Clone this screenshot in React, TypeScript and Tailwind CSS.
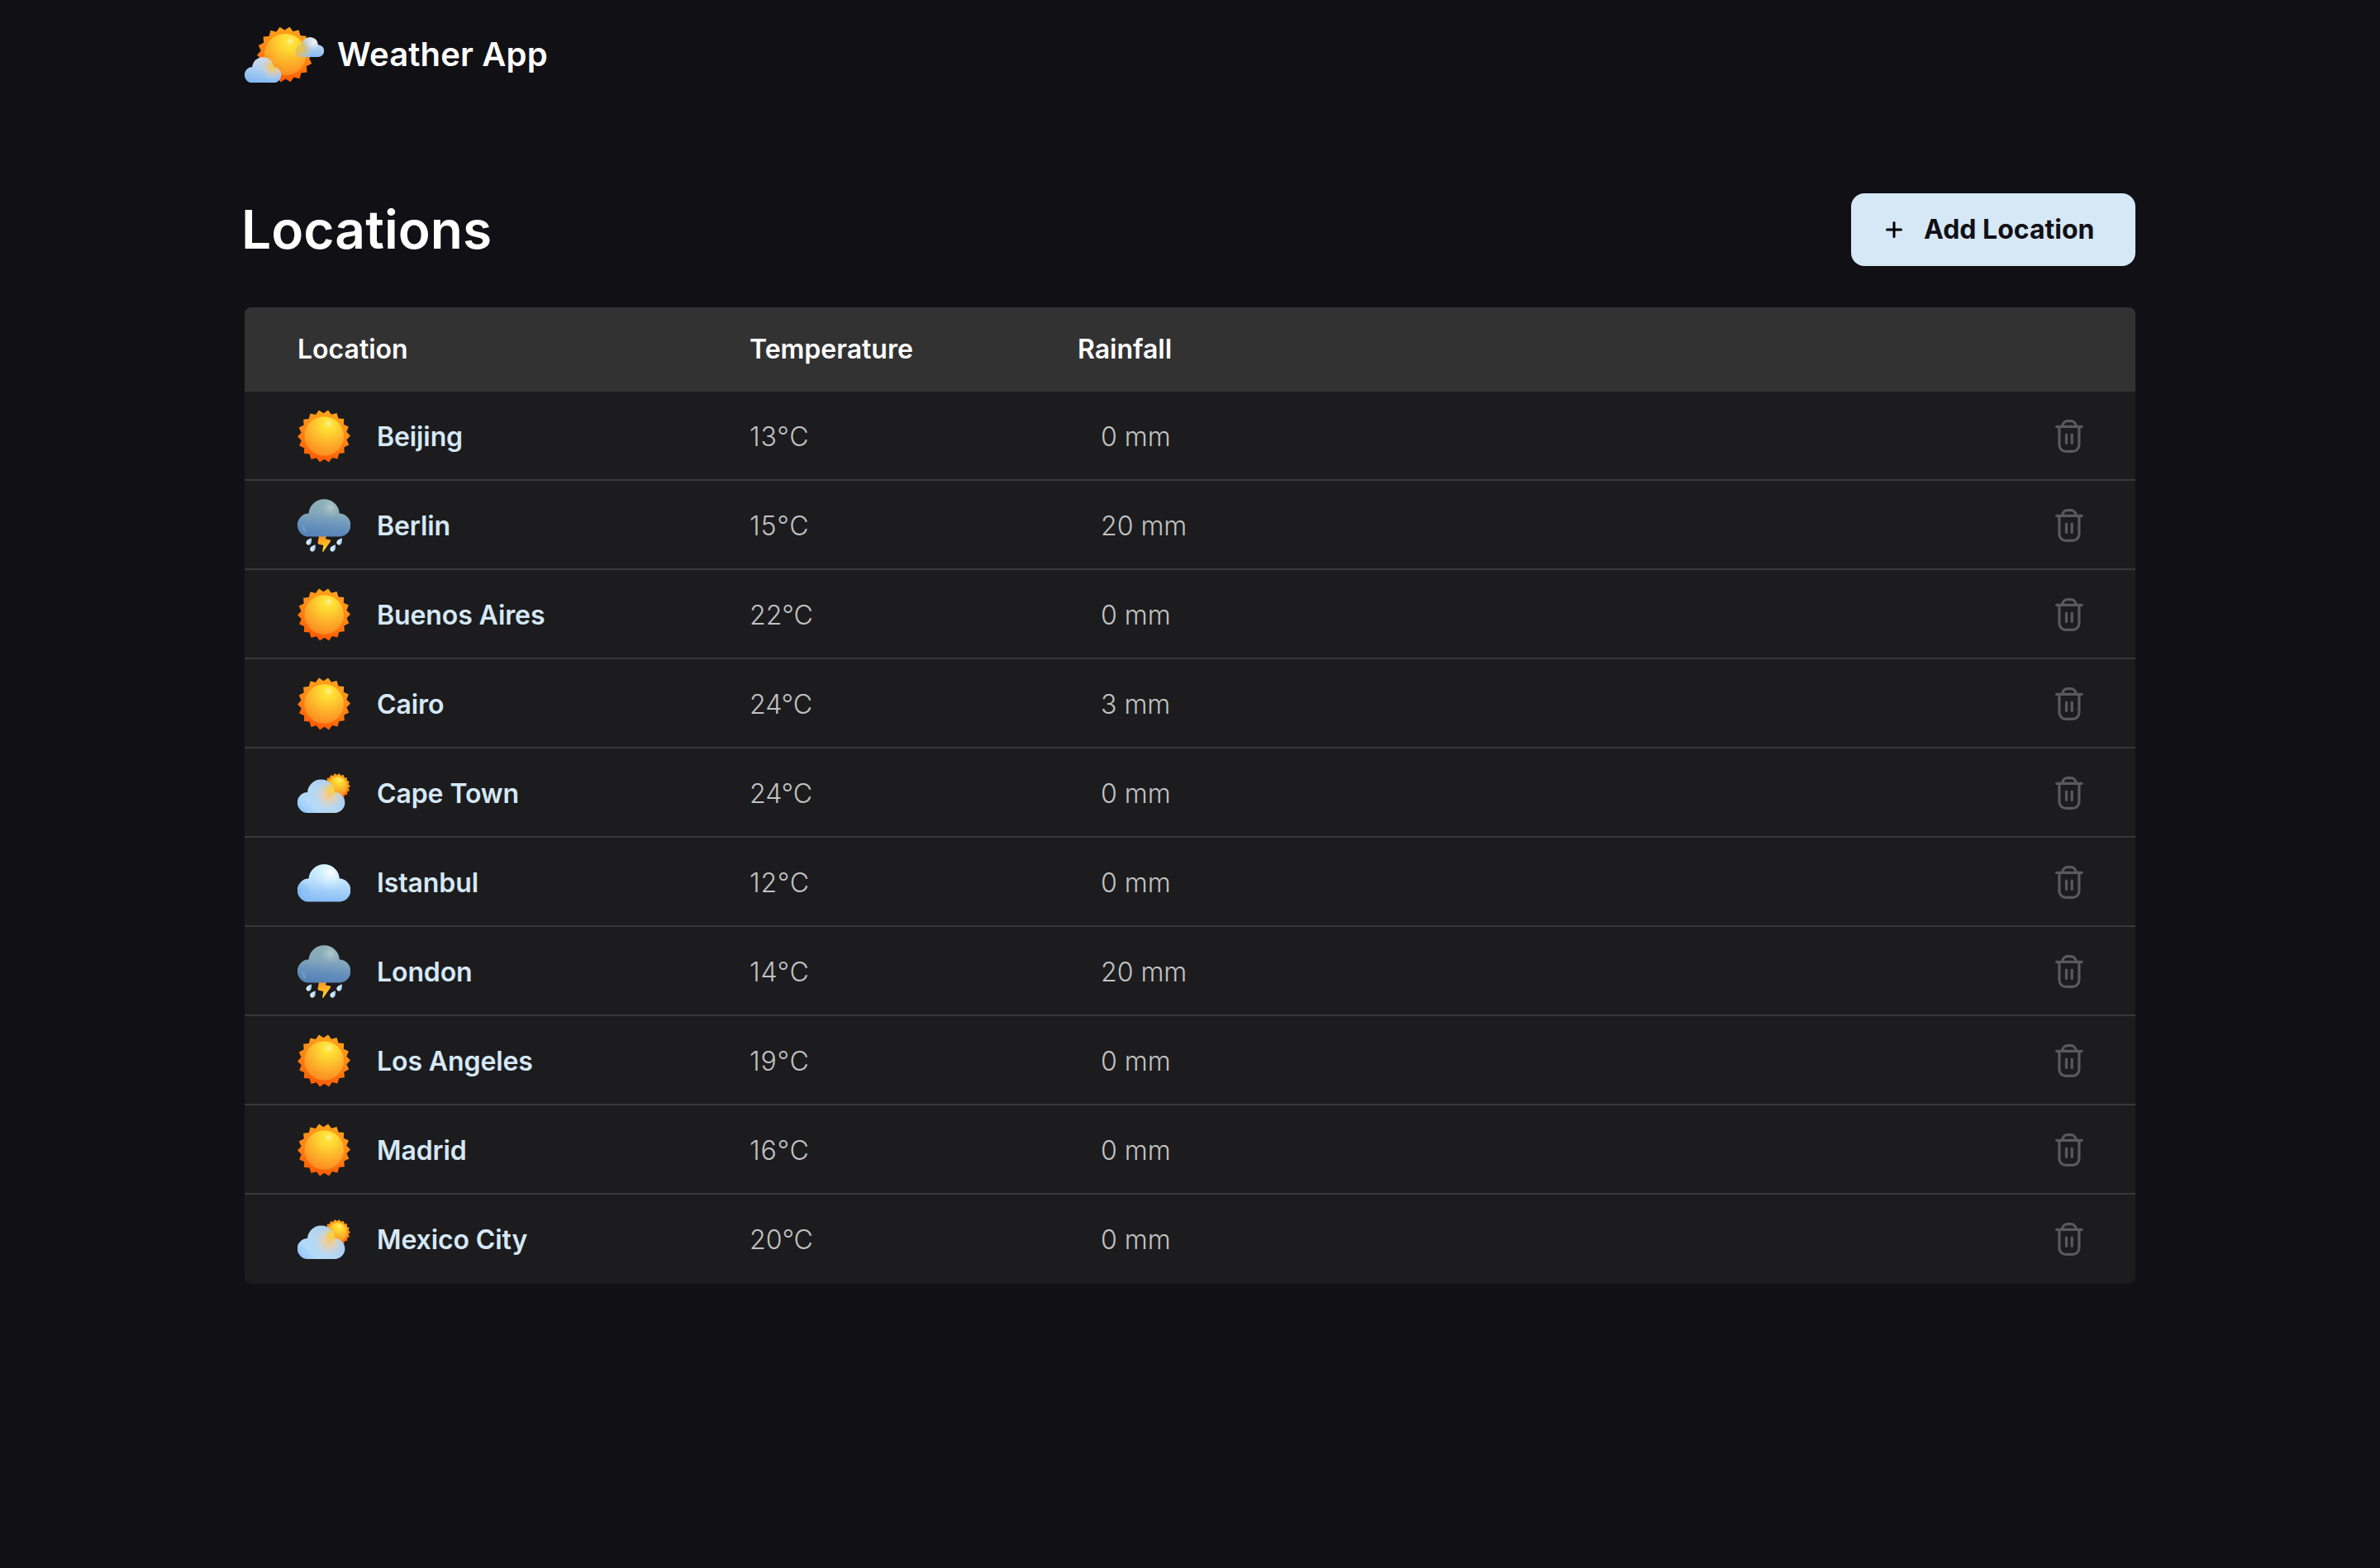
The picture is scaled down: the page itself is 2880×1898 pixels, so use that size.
import React, { useId } from 'react';

const CLOUD =
  'M14 45.6 A14 14 0 0 1 13.5 17.6 A18.7 18.7 0 0 1 50.8 17.6 A14 14 0 0 1 50 45.6 Z';

function starPoints(cx: number, cy: number, outer: number, inner: number) {
  const points: string[] = [];
  for (let i = 0; i < 36; i++) {
    const r = i % 2 === 0 ? outer : inner;
    const a = ((i * 10 - 1) * Math.PI) / 180;
    points.push(`${(cx + r * Math.cos(a)).toFixed(2)},${(cy + r * Math.sin(a)).toFixed(2)}`);
  }
  return points.join(' ');
}

const STAR = starPoints(32, 32, 32, 27.8);

function SunShape({ id, transform }: { id: string; transform?: string }) {
  return (
    <g transform={transform}>
      <defs>
        <linearGradient id={`${id}-ray`} x1="40" y1="2" x2="24" y2="62" gradientUnits="userSpaceOnUse">
          <stop offset="0" stopColor="#ffa31c" />
          <stop offset="0.5" stopColor="#ff8413" />
          <stop offset="1" stopColor="#ff5a02" />
        </linearGradient>
        <radialGradient id={`${id}-disk`} cx="37" cy="17" r="39" gradientUnits="userSpaceOnUse">
          <stop offset="0" stopColor="#ffe43a" />
          <stop offset="0.22" stopColor="#ffdc34" />
          <stop offset="0.6" stopColor="#fdb42b" />
          <stop offset="1" stopColor="#fb8c22" />
        </radialGradient>
        <radialGradient id={`${id}-shine`} cx="37.7" cy="16.8" r="7" gradientUnits="userSpaceOnUse">
          <stop offset="0" stopColor="#fff4b4" />
          <stop offset="1" stopColor="#ffe43a" stopOpacity="0" />
        </radialGradient>
      </defs>
      <polygon points={STAR} fill={`url(#${id}-ray)`} />
      <circle cx="32.2" cy="32" r="23.8" fill={`url(#${id}-disk)`} />
      <circle cx="37.7" cy="16.8" r="7" fill={`url(#${id}-shine)`} />
    </g>
  );
}

function SunIcon() {
  const id = useId();
  return (
    <svg className="size-16 shrink-0" viewBox="0 0 64 64">
      <SunShape id={id} />
    </svg>
  );
}

function CloudIcon() {
  const id = useId();
  return (
    <svg className="size-16 shrink-0" viewBox="0 0 64 64">
      <defs>
        <linearGradient id={`${id}-b`} x1="34" y1="0" x2="30" y2="46" gradientUnits="userSpaceOnUse">
          <stop offset="0" stopColor="#d2f3ff" />
          <stop offset="0.4" stopColor="#bfe2fd" />
          <stop offset="1" stopColor="#84bbf5" />
        </linearGradient>
        <radialGradient id={`${id}-h`} cx="40" cy="10" r="22" gradientUnits="userSpaceOnUse">
          <stop offset="0" stopColor="#ffffff" />
          <stop offset="0.25" stopColor="#eafaff" stopOpacity="0.8" />
          <stop offset="1" stopColor="#d2f3ff" stopOpacity="0" />
        </radialGradient>
        <radialGradient id={`${id}-l`} cx="0" cy="34" r="18" gradientUnits="userSpaceOnUse">
          <stop offset="0" stopColor="#74b0f5" stopOpacity="0.8" />
          <stop offset="1" stopColor="#74b0f5" stopOpacity="0" />
        </radialGradient>
      </defs>
      <g transform="translate(0 10)">
        <path d={CLOUD} fill={`url(#${id}-b)`} />
        <path d={CLOUD} fill={`url(#${id}-h)`} />
        <path d={CLOUD} fill={`url(#${id}-l)`} />
        <ellipse cx="8" cy="36.5" rx="1.3" ry="4.5" transform="rotate(-24 8 36.5)" fill="#bfe0ff" opacity="0.25" />
      </g>
    </svg>
  );
}

const DROP =
  'M3.2 -4.2 C3.6 -1.6 3.4 1 2.4 2.6 C1.2 4.5 -1.2 4.6 -2.5 3.2 C-3.9 1.6 -3.2 -0.6 -1.4 -2 C0 -3 1.8 -3.6 3.2 -4.2 Z';

const DROPS = [
  [13.7, 51.5],
  [18.4, 59.5],
  [50.6, 51.5],
  [42.7, 59.5],
];

function StormIcon() {
  const id = useId();
  return (
    <svg className="size-16 shrink-0" viewBox="0 0 64 64">
      <defs>
        <linearGradient id={`${id}-b`} x1="35" y1="0" x2="30" y2="45" gradientUnits="userSpaceOnUse">
          <stop offset="0" stopColor="#8fb0b9" />
          <stop offset="0.4" stopColor="#85a8bb" />
          <stop offset="0.75" stopColor="#648fbb" />
          <stop offset="1" stopColor="#5684b8" />
        </linearGradient>
        <radialGradient id={`${id}-h`} cx="40" cy="10" r="13" gradientUnits="userSpaceOnUse">
          <stop offset="0" stopColor="#b3c8cb" />
          <stop offset="1" stopColor="#9db9bf" stopOpacity="0" />
        </radialGradient>
        <linearGradient id={`${id}-z`} x1="30" y1="45" x2="34" y2="64" gradientUnits="userSpaceOnUse">
          <stop offset="0" stopColor="#ff9422" />
          <stop offset="0.5" stopColor="#ffb626" />
          <stop offset="1" stopColor="#ffe436" />
        </linearGradient>
        <linearGradient id={`${id}-d`} x1="-3" y1="0" x2="4" y2="1" gradientUnits="userSpaceOnUse">
          <stop offset="0" stopColor="#e9f8ff" />
          <stop offset="0.5" stopColor="#c3e4fb" />
          <stop offset="1" stopColor="#7fb4e6" />
        </linearGradient>
      </defs>
      <path
        d="M26 44.5 H34.8 L34 48.6 L39 49.2 Q40.6 49.8 39.9 51.4 L31.2 63.8 Q30.3 64.8 30.2 63.4 L31.4 55.9 L25.6 54.8 Q24.4 54.2 24.6 52.6 Z"
        fill={`url(#${id}-z)`}
      />
      <path d={CLOUD} fill={`url(#${id}-b)`} />
      <path d={CLOUD} fill={`url(#${id}-h)`} />
      <ellipse cx="7.6" cy="36" rx="1.6" ry="5" transform="rotate(-24 7.6 36)" fill="#8db4d8" opacity="0.35" />
      {DROPS.map(([x, y]) => (
        <path key={`${x}-${y}`} d={DROP} transform={`translate(${x} ${y})`} fill={`url(#${id}-d)`} />
      ))}
    </svg>
  );
}

function PartlyCloudyIcon() {
  const id = useId();
  return (
    <svg className="size-16 shrink-0" viewBox="0 0 64 64">
      <defs>
        <linearGradient id={`${id}-b`} x1="6" y1="46" x2="46" y2="8" gradientUnits="userSpaceOnUse">
          <stop offset="0" stopColor="#8ec4fb" />
          <stop offset="0.3" stopColor="#b3daf9" />
          <stop offset="0.6" stopColor="#b5d8f2" />
          <stop offset="1" stopColor="#a9cdf0" />
        </linearGradient>
        <radialGradient id={`${id}-p`} cx="43" cy="21" r="21" gradientUnits="userSpaceOnUse">
          <stop offset="0" stopColor="#f0c77c" />
          <stop offset="0.35" stopColor="#f2cfa0" stopOpacity="0.8" />
          <stop offset="1" stopColor="#d8d8d8" stopOpacity="0" />
        </radialGradient>
        <radialGradient id={`${id}-y`} cx="46.5" cy="14" r="10" gradientUnits="userSpaceOnUse">
          <stop offset="0" stopColor="#f8d43a" />
          <stop offset="0.4" stopColor="#f8d045" stopOpacity="0.85" />
          <stop offset="1" stopColor="#f5cc68" stopOpacity="0" />
        </radialGradient>
      </defs>
      <SunShape id={id} transform="translate(32.2 8) scale(0.495)" />
      <g transform="translate(0 15.3) scale(0.891)">
        <path d={CLOUD} fill={`url(#${id}-b)`} />
        <path d={CLOUD} fill={`url(#${id}-p)`} />
        <path d={CLOUD} fill={`url(#${id}-y)`} />
        <ellipse cx="8" cy="36.5" rx="1.3" ry="4.5" transform="rotate(-24 8 36.5)" fill="#cfe6ff" opacity="0.25" />
      </g>
    </svg>
  );
}

function Logo() {
  const id = useId();
  return (
    <svg className="h-[68px] w-24 shrink-0" viewBox="0 0 96 68">
      <defs>
        <linearGradient id={`${id}-b`} x1="36" y1="0" x2="28" y2="46" gradientUnits="userSpaceOnUse">
          <stop offset="0" stopColor="#d3dde8" />
          <stop offset="0.45" stopColor="#b0d0ef" />
          <stop offset="1" stopColor="#82b8f3" />
        </linearGradient>
        <radialGradient id={`${id}-y1`} cx="50" cy="17" r="23" gradientUnits="userSpaceOnUse">
          <stop offset="0" stopColor="#f7cb3e" />
          <stop offset="0.4" stopColor="#ecc98a" stopOpacity="0.8" />
          <stop offset="1" stopColor="#cfd4dc" stopOpacity="0" />
        </radialGradient>
        <radialGradient id={`${id}-y2`} cx="8" cy="27" r="32" gradientUnits="userSpaceOnUse">
          <stop offset="0" stopColor="#f0c832" />
          <stop offset="0.4" stopColor="#d9be72" stopOpacity="0.9" />
          <stop offset="1" stopColor="#cfd4dc" stopOpacity="0" />
        </radialGradient>
        <radialGradient id={`${id}-w`} cx="41" cy="11" r="19" gradientUnits="userSpaceOnUse">
          <stop offset="0" stopColor="#f6f4f2" />
          <stop offset="1" stopColor="#e2e6ec" stopOpacity="0" />
        </radialGradient>
      </defs>
      <SunShape id={id} transform="translate(15 0) scale(1.0625)" />
      <g transform="translate(0 37) scale(0.6875)">
        <path d={CLOUD} fill={`url(#${id}-b)`} />
        <path d={CLOUD} fill={`url(#${id}-y1)`} />
      </g>
      <g transform="translate(62 12.8) scale(0.531)">
        <path d={CLOUD} fill={`url(#${id}-b)`} />
        <path d={CLOUD} fill={`url(#${id}-y2)`} />
        <path d={CLOUD} fill={`url(#${id}-w)`} />
      </g>
    </svg>
  );
}

function TrashIcon() {
  return (
    <svg
      className="h-10 w-[34px]"
      viewBox="0 0 34 40"
      fill="none"
      stroke="#5a5a5b"
      strokeWidth="3.2"
      strokeLinecap="round"
    >
      <path d="M1.7 8.4 H32.1" />
      <path d="M8.6 8 C9 4.2 11.6 1.7 15 1.7 H18.8 C22.2 1.7 24.8 4.2 25.2 8" />
      <path d="M4.9 9 V30.4 A8 8 0 0 0 12.9 38.4 H20.9 A8 8 0 0 0 28.9 30.4 V9" />
      <path d="M13.5 18.2 V28.4 M20.2 18.2 V28.4" />
    </svg>
  );
}

const ICONS = {
  sun: SunIcon,
  storm: StormIcon,
  partly: PartlyCloudyIcon,
  cloud: CloudIcon,
};

type Row = { name: string; temp: number; rain: number; icon: keyof typeof ICONS };

const ROWS: Row[] = [
  { name: 'Beijing', temp: 13, rain: 0, icon: 'sun' },
  { name: 'Berlin', temp: 15, rain: 20, icon: 'storm' },
  { name: 'Buenos Aires', temp: 22, rain: 0, icon: 'sun' },
  { name: 'Cairo', temp: 24, rain: 3, icon: 'sun' },
  { name: 'Cape Town', temp: 24, rain: 0, icon: 'partly' },
  { name: 'Istanbul', temp: 12, rain: 0, icon: 'cloud' },
  { name: 'London', temp: 14, rain: 20, icon: 'storm' },
  { name: 'Los Angeles', temp: 19, rain: 0, icon: 'sun' },
  { name: 'Madrid', temp: 16, rain: 0, icon: 'sun' },
  { name: 'Mexico City', temp: 20, rain: 0, icon: 'partly' },
];

export default function App() {
  return (
    <div className="min-h-screen bg-[#111015] pt-8 font-['Inter',sans-serif] text-white">
      <div className="mx-auto w-[2288px]">
        <header className="flex h-[68px] items-center gap-4">
          <Logo />
          <span className="text-[40px] leading-[48px] font-semibold tracking-[0.15px]">Weather App</span>
        </header>

        <div className="mt-[134px] flex h-[88px] items-center justify-between">
          <h1 className="-ml-1 text-[64px] leading-[76px] font-semibold tracking-[0.1px]">Locations</h1>
          <button className="flex h-[88px] w-[344px] items-center rounded-2xl bg-[#d6e8f6] pl-[42px] text-[32px] leading-10 font-bold text-[#111015]">
            <svg className="size-5" viewBox="0 0 20 20" fill="none" stroke="#000" strokeWidth="3" strokeLinecap="round">
              <path d="M10 1.5 V18.5 M1.5 10 H18.5" />
            </svg>
            <span className="ml-[26px] whitespace-nowrap">Add Location</span>
          </button>
        </div>

        <main className="mt-[50px] overflow-hidden rounded-lg bg-[#1c1c1e] text-[32px] leading-10">
          <div className="grid h-[102px] grid-cols-[547px_397px_1fr] items-center bg-[#323232] pl-16 font-semibold">
            <span>Location</span>
            <span>Temperature</span>
            <span>Rainfall</span>
          </div>
          {ROWS.map((row) => {
            const Icon = ICONS[row.icon];
            return (
              <div
                key={row.name}
                className="relative grid h-[108px] grid-cols-[547px_425px_1fr_34px] items-center pr-[63px] pl-16 after:absolute after:inset-x-0 after:bottom-0 after:h-0.5 after:bg-[#38383a] last:after:hidden"
              >
                <div className="flex items-center gap-8">
                  <Icon />
                  <span className="pt-0.5 font-semibold tracking-[-0.1px] text-[#d6e8f6]">{row.name}</span>
                </div>
                <span
                  className={
                    row.temp < 20
                      ? 'pt-0.5 font-light tracking-[0.8px] text-[#c2c2c2]'
                      : 'pt-0.5 font-light text-[#c2c2c2]'
                  }
                >
                  {row.temp}°C
                </span>
                <span className="pt-0.5 font-light text-[#c2c2c2]">{row.rain} mm</span>
                <button aria-label={`Delete ${row.name}`}>
                  <TrashIcon />
                </button>
              </div>
            );
          })}
        </main>
      </div>
    </div>
  );
}
